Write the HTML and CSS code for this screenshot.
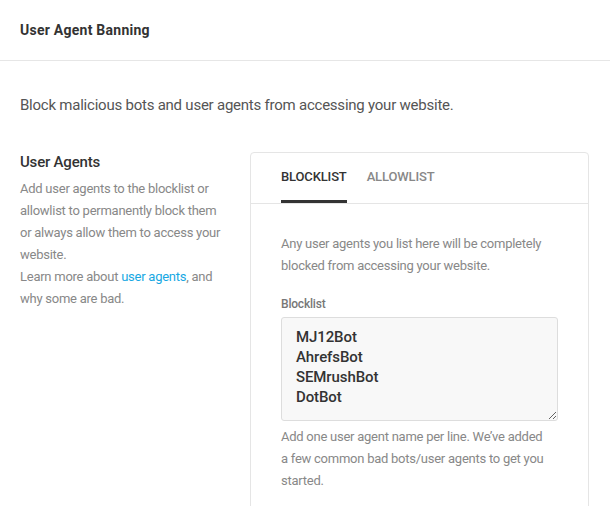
FILE: index.html
```html
<!DOCTYPE html>
<html>
<head>
<meta charset="utf-8">
<link rel="stylesheet" href="styles.css">
</head>
<body>
<header class="topbar">
  <h1 class="title">User Agent Banning</h1>
</header>
<main class="content">
  <p class="intro">Block malicious bots and user agents from accessing your website.</p>
  <section class="row">
    <div class="side">
      <h2 class="side-title">User Agents</h2>
      <p class="side-text">Add user agents to the blocklist or allowlist to permanently block them or always allow them to access your website.<br>Learn more about <a class="link" href="#">user agents</a>, and why some are bad.</p>
    </div>
    <div class="card">
      <nav class="tabs">
        <span class="tab active">Blocklist</span>
        <span class="tab">Allowlist</span>
      </nav>
      <div class="card-body">
        <p class="help">Any user agents you list here will be completely blocked from accessing your website.</p>
        <label class="label" for="bl">Blocklist</label>
        <textarea id="bl" class="list">MJ12Bot
AhrefsBot
SEMrushBot
DotBot</textarea>
        <p class="hint">Add one user agent name per line. We’ve added a few common bad bots/user agents to get you started.</p>
      </div>
    </div>
  </section>
</main>
</body>
</html>
```
FILE: styles.css
```css
html, body {
  margin: 0;
  padding: 0;
  background: #fff;
  overflow: hidden;
}
body {
  font-family: Roboto, "Liberation Sans", sans-serif;
  color: #333;
}
.topbar {
  height: 60px;
  border-bottom: 1px solid #e6e6e6;
  display: flex;
  align-items: center;
  padding: 0 20px;
}
.title {
  margin: 0;
  font-size: 14px;
  font-weight: 700;
  letter-spacing: 0.25px;
  color: #333;
}
.content {
  padding: 0 21px 0 20px;
}
.intro {
  margin: 33px 0 35px;
  font-size: 15px;
  line-height: 22px;
  letter-spacing: -0.23px;
  color: #555;
}
.row {
  display: grid;
  grid-template-columns: 210px 1fr;
  column-gap: 20px;
}
.side-title {
  margin: 0;
  font-size: 15px;
  font-weight: 500;
  line-height: 22px;
  letter-spacing: -0.2px;
  color: #333;
}
.side-text {
  margin: 5px 0 0;
  font-size: 13px;
  line-height: 22px;
  letter-spacing: -0.25px;
  color: #888;
}
.link {
  color: #17a8e3;
  text-decoration: none;
}
.card {
  border: 1px solid #e5e5e5;
  border-radius: 4px;
  margin-top: 1px;
}
.tabs {
  display: flex;
  gap: 20px;
  padding: 0 30px;
  border-bottom: 1px solid #e5e5e5;
}
.tab {
  font-size: 13px;
  font-weight: 500;
  text-transform: uppercase;
  letter-spacing: -0.15px;
  color: #888;
  line-height: 16px;
  padding: 16px 0 15px;
  border-bottom: 3px solid transparent;
}
.tab.active {
  color: #333;
  border-bottom-color: #333;
}
.card-body {
  padding: 29px 30px 30px;
}
.help {
  margin: 0 0 18px;
  font-size: 13px;
  line-height: 22px;
  letter-spacing: -0.25px;
  color: #888;
}
.label {
  display: block;
  font-size: 12px;
  font-weight: 500;
  line-height: 18px;
  letter-spacing: -0.2px;
  color: #777;
  margin-bottom: 4px;
}
.list {
  display: block;
  box-sizing: border-box;
  width: 277px;
  height: 104px;
  padding: 9px 14px;
  margin: 0;
  border: 1px solid #ddd;
  border-radius: 3px;
  background: #f8f8f8;
  font-family: Roboto, "Liberation Sans", sans-serif;
  font-size: 15px;
  font-weight: 500;
  line-height: 20px;
  letter-spacing: -0.1px;
  color: #333;
}
.hint {
  margin: 5px 0 0;
  max-width: 266px;
  font-size: 13px;
  line-height: 22px;
  letter-spacing: -0.25px;
  color: #888;
}
```
